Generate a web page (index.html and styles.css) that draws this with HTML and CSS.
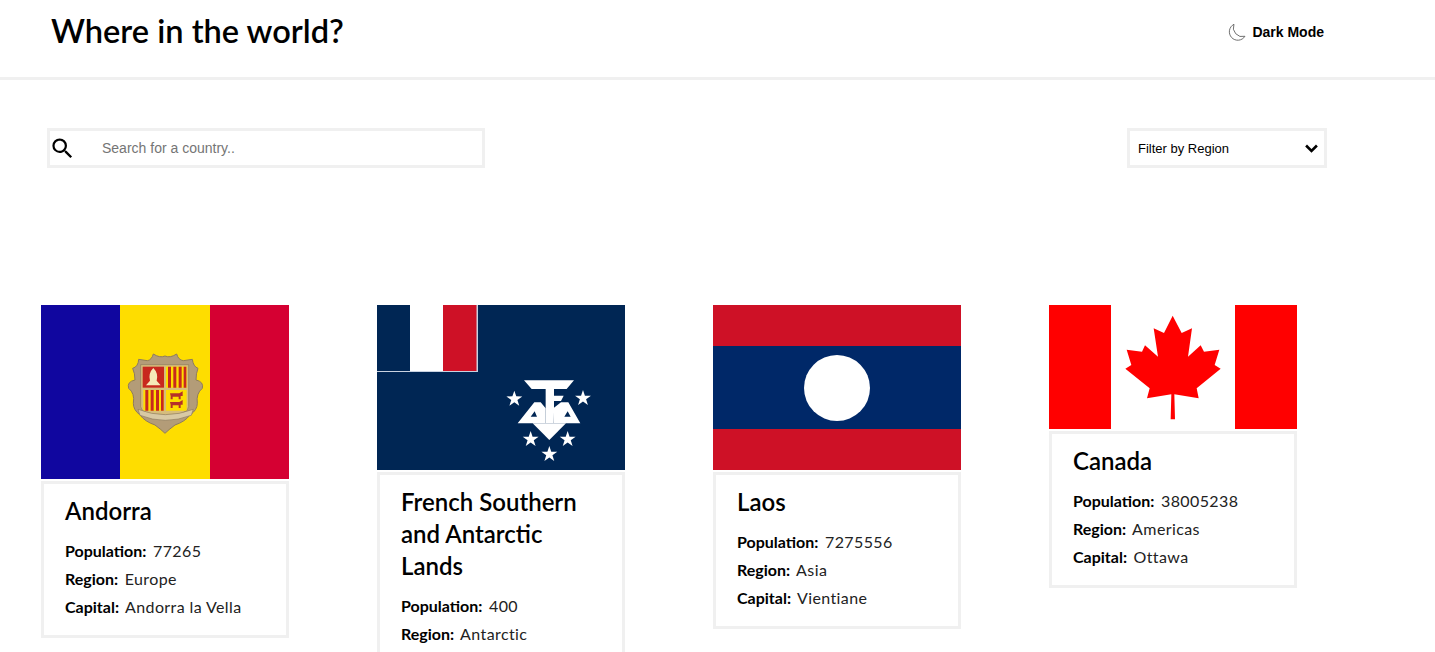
FILE: index.html
```html
<!DOCTYPE html>
<html lang="en">
  <head>
    <meta charset="UTF-8" />
    <meta name="viewport" content="width=device-width, initial-scale=1.0" />
    <title>Where in the world?</title>
    <link rel="stylesheet" href="styles.css">
  </head>
  <body>
    <header class="top-bar">
      <h1>Where in the world?</h1>
      <button type="button" class="mode-btn">
        <svg class="moon" viewBox="0 0 18 18" width="19" height="19" aria-hidden="true">
          <path d="M6.600 1.200A8 8 0 1 0 17 12.600 8.600 8.600 0 0 1 6.600 1.200Z" fill="none" stroke="#555" stroke-width="0.8" />
        </svg>
        Dark Mode
      </button>
    </header>

    <section class="controls">
      <label class="search">
        <svg viewBox="0 0 24 24" width="27" height="27" aria-hidden="true">
          <path d="M15.500 14h-.790l-.280-.270A6.470 6.470 0 0 0 16 9.500 6.500 6.500 0 1 0 9.500 16c1.610 0 3.090-.590 4.230-1.570l.270.280v.790l5 4.990L20.490 19l-4.990-5zm-6 0C7.010 14 5 11.990 5 9.500S7.010 5 9.500 5 14 7.010 14 9.500 11.990 14 9.500 14z" />
        </svg>
        <input type="text" placeholder="Search for a country.." />
      </label>
      <div class="region-filter">
        <span>Filter by Region</span>
        <svg viewBox="0 0 12 8" width="13" height="9" aria-hidden="true">
          <path d="M1 1.200 6 6.200 11 1.200" fill="none" stroke="#000" stroke-width="2.400" />
        </svg>
      </div>
    </section>

    <main class="countries">
      <article class="country">
        <svg class="flag flag-andorra" viewBox="0 0 248 174" aria-label="Flag of Andorra">
          <rect width="248" height="174" fill="#fedd00" />
          <rect width="79" height="174" fill="#10069f" />
          <rect x="169" width="79" height="174" fill="#d50032" />
          <!-- coat of arms, drawn on a 3x grid -->
          <g transform="translate(69 35) scale(0.3333)">
            <path d="M130 42Q150 55 165 48 180 55 200 42 205 60 220 62L247 58Q250 80 264 85 258 100 258 120 282 125 277 145 258 160 262 190 262 210 240 225 225 245 195 255 175 270 165 280 155 270 135 255 105 245 90 225 70 210 70 190 75 160 56 145 50 125 75 120 75 100 68 85 85 80 86 58L112 62Q125 60 130 42Z" fill="#b39c78" stroke="#8d7a5e" stroke-width="3" />
            <path d="M92 74H236V200Q236 222 165 232 92 222 92 200Z" fill="#d6bd7c" stroke="#8d7a5e" stroke-width="2" />
            <rect x="98" y="80" width="64" height="63" fill="#c8281e" />
            <path d="M130 84Q146 100 140 122L152 136H108L120 122Q114 100 130 84Z" fill="#f5e9b8" />
            <rect x="168" y="80" width="62" height="63" fill="#fedd00" />
            <path d="M174 80h9v63h-9zM190 80h9v63h-9zM206 80h9v63h-9zM221 80h8v63h-8z" fill="#c8281e" />
            <rect x="100" y="150" width="62" height="62" fill="#fedd00" />
            <path d="M106 150h9v62h-9zM122 150h9v62h-9zM138 150h9v62h-9zM153 150h8v62h-8z" fill="#c8281e" />
            <rect x="168" y="150" width="62" height="62" fill="#fedd00" />
            <path d="M180 160H208L218 154V168H212V178H206V170H188V178H182V168ZM180 186H208L218 180V194H212V204H206V196H188V204H182V194Z" fill="#b5302a" />
            <path d="M84 208Q165 240 250 208L244 226Q165 256 90 226Z" fill="#d8c9a4" stroke="#8d7a5e" stroke-width="2" />
          </g>
        </svg>
        <div class="info">
          <h2>Andorra</h2>
          <p><b>Population:</b> 77265</p>
          <p><b>Region:</b> Europe</p>
          <p><b>Capital:</b> Andorra la Vella</p>
        </div>
      </article>

      <article class="country">
        <svg class="flag flag-taaf" viewBox="0 0 248 165" aria-label="Flag of the French Southern and Antarctic Lands">
          <defs>
            <path id="star" d="M0-25 5.800-8 23.800-7.700 9.300 3 14.700 20.200 0 9.800-14.700 20.200-9.300 3-23.800-7.700-5.800-8Z" />
          </defs>
          <rect width="248" height="165" fill="#002654" />
          <rect width="101" height="67" fill="#c9d2e0" />
          <rect width="33" height="66" fill="#002654" />
          <rect x="33" width="33" height="66" fill="#fff" />
          <rect x="66" width="33.500" height="66" fill="#ce1126" />
          <!-- emblem, drawn on a 3x grid -->
          <g transform="translate(123 70) scale(0.3333)" fill="#fff">
            <path d="M72 16H222L200 42H162V62H191L183 78H162V112L160 145H137V42H95Z" />
            <path fill-rule="evenodd" d="M53 145 103 82H122L137 100V145ZM92 125H111L104 109Z" />
            <path fill-rule="evenodd" d="M160 145V100L183 82H205L241 145ZM193 125H212L203 109Z" />
            <path d="M98 145H198L148 195Z" />
            <use href="#star" x="43" y="72" />
            <use href="#star" x="249" y="70" />
            <use href="#star" x="92" y="193" />
            <use href="#star" x="203" y="193" />
            <use href="#star" x="148" y="238" />
          </g>
        </svg>
        <div class="info">
          <h2>French Southern and Antarctic Lands</h2>
          <p><b>Population:</b> 400</p>
          <p><b>Region:</b> Antarctic</p>
          <p><b>Capital:</b> Port-aux-Français</p>
        </div>
      </article>

      <article class="country">
        <svg class="flag flag-laos" viewBox="0 0 248 165" aria-label="Flag of Laos">
          <rect width="248" height="165" fill="#ce1126" />
          <rect y="41" width="248" height="83" fill="#002868" />
          <circle cx="124" cy="83" r="33" fill="#fff" />
        </svg>
        <div class="info">
          <h2>Laos</h2>
          <p><b>Population:</b> 7275556</p>
          <p><b>Region:</b> Asia</p>
          <p><b>Capital:</b> Vientiane</p>
        </div>
      </article>

      <article class="country">
        <svg class="flag flag-canada" viewBox="27 15 744 372" aria-label="Flag of Canada">
          <rect x="27" y="15" width="744" height="372" fill="#fff" />
          <rect x="27" y="15" width="186" height="372" fill="#f00" />
          <rect x="585" y="15" width="186" height="372" fill="#f00" />
          <path d="M398 47 425 99 456 85 444 170 482 136 492 155 538 149 524 195 542 206 470 265 476 295 403 283 405 358H392L394 283 321 295 329 265 256 206 274 195 260 149 306 155 315 136 354 170 341 85 372 99Z" fill="#f00" />
        </svg>
        <div class="info">
          <h2>Canada</h2>
          <p><b>Population:</b> 38005238</p>
          <p><b>Region:</b> Americas</p>
          <p><b>Capital:</b> Ottawa</p>
        </div>
      </article>
    </main>
  </body>
</html>
```

FILE: styles.css
```css
/* General Styles */
html {
  overflow: hidden;
  height: 100%;
}

body {
  font-family: Lato, "Noto Sans", sans-serif;
  margin: 0;
  padding: 0;
  background-color: #fff;
  color: #000;
}

/* Header */
.top-bar {
  display: flex;
  justify-content: space-between;
  align-items: center;
  height: 60px;
  padding: 0 111px 17px 51px;
  border-bottom: 3px solid #f0f0f0;
}

.top-bar h1 {
  margin: 0;
  font-size: 32.600px;
  font-weight: 600;
}

.mode-btn {
  display: flex;
  align-items: center;
  gap: 6px;
  margin-top: 4px;
  padding: 0;
  border: none;
  background: none;
  font-family: "Liberation Sans", Arial, sans-serif;
  font-size: 14px;
  font-weight: bold;
  color: #000;
  cursor: pointer;
}

/* Search and filter */
.controls {
  display: flex;
  justify-content: space-between;
  padding: 48px 108px 0 47px;
}

.search {
  display: flex;
  align-items: center;
  width: 438px;
  height: 40px;
  box-sizing: border-box;
  border: 3px solid #f0f0f0;
}

.search svg {
  flex: none;
  margin-left: -1px;
}

.search input {
  flex: 1;
  min-width: 0;
  border: none;
  outline: none;
  padding: 0 0 0 26px;
  font-family: "Liberation Sans", Arial, sans-serif;
  font-size: 14px;
}

.search input::placeholder {
  color: #757575;
}

.region-filter {
  display: flex;
  justify-content: space-between;
  align-items: center;
  width: 200px;
  height: 40px;
  box-sizing: border-box;
  padding: 0 6px 0 8px;
  border: 3px solid #f0f0f0;
  font-family: "Liberation Sans", Arial, sans-serif;
  font-size: 13px;
}

/* Country cards */
.countries {
  display: grid;
  grid-template-columns: repeat(4, 248px);
  column-gap: 88px;
  align-items: start;
  padding: 137px 0 0 41px;
}

.flag {
  display: block;
  width: 248px;
}

.flag-andorra {
  height: 174px;
}

.flag-taaf,
.flag-laos {
  height: 165px;
}

.flag-canada {
  height: 124px;
}

.info {
  margin-top: 2px;
  padding: 11px 21px 14px;
  border: 3px solid #f0f0f0;
}

.info h2 {
  margin: 0 0 10px;
  font-size: 24px;
  line-height: 32px;
  font-weight: 600;
}

.info p {
  margin: 0;
  font-size: 16px;
  line-height: 28px;
  letter-spacing: 0.4px;
  color: #222;
}

.info b {
  margin-right: 2px;
  font-weight: 700;
  letter-spacing: 0;
  color: #000;
}
```
